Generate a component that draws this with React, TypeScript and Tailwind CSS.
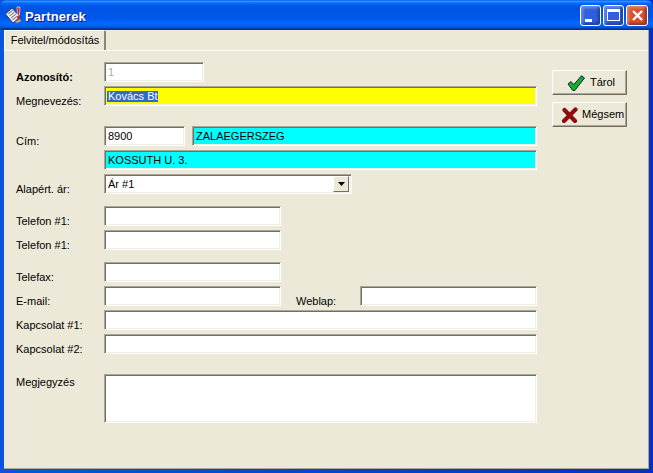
const sunken =
  "h-5 border border-t-[#aca899] border-l-[#aca899] border-r-white border-b-white shadow-[inset_1px_1px_0_#716f64,inset_-1px_-1px_0_#f1efe2]"

function Field({ className = "", children }: { className?: string; children?: React.ReactNode }) {
  return (
    <div className={`${sunken} flex shrink-0 items-center overflow-hidden pl-[3px] pt-[1px] leading-none ${className}`}>
      {children}
    </div>
  )
}

function Row({
  label,
  bold,
  className = "",
  children,
}: {
  label: string
  bold?: boolean
  className?: string
  children?: React.ReactNode
}) {
  return (
    <div className={`flex h-5 ${className}`}>
      <span className={`w-[88px] shrink-0 pt-[10px] leading-none ${bold ? "font-bold" : ""}`}>{label}</span>
      {children}
    </div>
  )
}

function CapButton({ children, className = "" }: { children: React.ReactNode; className?: string }) {
  return (
    <div
      className={`flex h-[21px] items-center justify-center rounded-[3px] border border-white shadow-[inset_-2px_-2px_3px_rgba(0,0,40,0.35),inset_2px_2px_3px_rgba(255,255,255,0.3)] ${className}`}
    >
      {children}
    </div>
  )
}

function PushButton({ children, className = "" }: { children: React.ReactNode; className?: string }) {
  return (
    <div
      className={`flex h-[25px] w-[75px] items-center border border-t-white border-l-white border-r-[#716f64] border-b-[#716f64] shadow-[inset_-1px_-1px_0_#aca899] ${className}`}
    >
      {children}
    </div>
  )
}

function AppIcon() {
  return (
    <svg width="18" height="18" viewBox="0 0 18 18">
      <path d="M0.5 8 L7 2 L15 11 L8 17 Z" fill="#f4f4fa" stroke="#3a3a4a" strokeWidth="1" />
      <path d="M3 8 L8 4 M4.5 10 L9.5 6 M6 12 L11 8 M7.5 14 L12.5 10" stroke="#8a8a9a" strokeWidth="1.2" />
      <path d="M12 1 L15 1 L14.5 9 L12.5 9 Z" fill="#e81818" stroke="#fff" strokeWidth="0.6" />
      <circle cx="13.5" cy="11.5" r="1.4" fill="#e81818" />
      <path d="M10 16 L15 13 L16 15 L12 17 Z" fill="#e8a060" />
    </svg>
  )
}

export default function App() {
  return (
    <div className="flex h-[473px] w-[653px] flex-col overflow-hidden bg-gradient-to-r from-[#0855dd] to-[#0331c4] font-['Liberation_Sans',sans-serif] text-[11px] text-black">
      {/* title bar */}
      <div className="flex h-[30px] shrink-0 items-center justify-between rounded-t-[7px] bg-[linear-gradient(to_bottom,#0058ee_0%,#3593ff_4%,#288eff_6%,#127dff_8%,#036ffc_10%,#0262ee_14%,#0057e5_20%,#0054e3_24%,#0055eb_56%,#005bf5_66%,#026afe_76%,#0062ef_86%,#0052d6_92%,#0040ab_94%,#003092_100%)] pl-[5px] pr-[5px]">
        <div className="flex items-center gap-[2px]">
          <AppIcon />
          <span className="pt-[3px] text-[13px] font-bold tracking-[0.1px] text-white [text-shadow:1px_1px_0_#0f1089]">
            Partnerek
          </span>
        </div>
        <div className="flex gap-[2px]">
          <CapButton className="w-[21px] bg-[#2f5fdf]">
            <div className="mt-[10px] mr-[5px] h-[3px] w-[7px] bg-white" />
          </CapButton>
          <CapButton className="w-[21px] bg-[#2f5fdf]">
            <div className="h-[12px] w-[13px] border border-t-[3px] border-white" />
          </CapButton>
          <CapButton className="w-[22px] bg-[#d9512c]">
            <svg width="13" height="13" viewBox="0 0 13 13">
              <path d="M2 2 L11 11 M11 2 L2 11" stroke="#fff" strokeWidth="2.4" />
            </svg>
          </CapButton>
        </div>
      </div>

      {/* client area */}
      <div className="mx-[4px] mb-[4px] flex min-h-0 flex-1 flex-col border-r border-b border-[#aca899] bg-[#ece9d8]">
        <div className="flex h-[20px] shrink-0">
          <div className="flex w-[102px] items-center justify-center rounded-t-[2px] border-t border-l border-r-2 border-t-white border-l-white border-r-[#8a8778] pl-[1px] leading-none">
            Felvitel/módosítás
          </div>
        </div>
        <div className="flex min-h-0 flex-1 border-t border-white">
          {/* form */}
          <div className="ml-[12px] mt-[11px] flex w-[521px] flex-col gap-1">
            <Row label="Azonosító:" bold>
              <Field className="w-[100px] bg-white text-[#aca899]">1</Field>
            </Row>
            <Row label="Megnevezés:">
              <Field className="w-[433px] bg-[#ffff00]">
                <span className="-ml-[1px] bg-[#316ac5] pl-[1px] text-white">Kovács Bt</span>
              </Field>
            </Row>
            <Row label="Cím:" className="mt-[16px]">
              <Field className="w-[81px] bg-white">8900</Field>
              <Field className="ml-[7px] w-[345px] bg-[#00ffff]">ZALAEGERSZEG</Field>
            </Row>
            <Row label="">
              <Field className="w-[433px] bg-[#00ffff]">KOSSUTH U. 3.</Field>
            </Row>
            <Row label="Alapért. ár:">
              <Field className="w-[248px] bg-white !pr-[2px]">
                <span className="flex-1">Ár #1</span>
                <span className="mb-[1px] flex h-4 w-4 items-center justify-center border border-t-white border-l-white border-r-[#716f64] border-b-[#716f64] bg-[#ece9d8]">
                  <svg width="7" height="4" viewBox="0 0 7 4">
                    <path d="M0 0 H7 L3.5 4 Z" fill="#000" />
                  </svg>
                </span>
              </Field>
            </Row>
            <Row label="Telefon #1:" className="mt-[8px]">
              <Field className="w-[177px] bg-white" />
            </Row>
            <Row label="Telefon #1:">
              <Field className="w-[177px] bg-white" />
            </Row>
            <Row label="Telefax:" className="mt-[8px]">
              <Field className="w-[177px] bg-white" />
            </Row>
            <Row label="E-mail:">
              <Field className="w-[177px] bg-white" />
              <span className="w-[79px] shrink-0 pl-[15px] pt-[10px] leading-none">Weblap:</span>
              <Field className="w-[177px] bg-white" />
            </Row>
            <Row label="Kapcsolat #1:">
              <Field className="w-[433px] bg-white" />
            </Row>
            <Row label="Kapcsolat #2:">
              <Field className="w-[433px] bg-white" />
            </Row>
            <div className="mt-[16px] flex">
              <span className="w-[88px] shrink-0">Megjegyzés</span>
              <Field className="!h-[49px] w-[433px] bg-white" />
            </div>
          </div>

          {/* buttons */}
          <div className="ml-[15px] mt-[19px] flex flex-col gap-[7px]">
            <PushButton className="gap-[5px] pl-[14px]">
              <svg width="18" height="16" viewBox="0 0 18 16">
                <path d="M1 9 L4 6.5 L6.8 9.5 L14.5 0.8 L17.5 3 L7.8 15.5 L5.8 15.5 Z" fill="#14b01e" stroke="#06215e" strokeWidth="1" />
              </svg>
              <span>Tárol</span>
            </PushButton>
            <PushButton className="gap-[4px] pl-[9px]">
              <svg width="16" height="16" viewBox="0 0 16 16">
                <path d="M2.5 3 L13 14 M13.5 2.5 L2 14" stroke="#8e0c10" strokeWidth="4.2" strokeLinecap="round" />
              </svg>
              <span>Mégsem</span>
            </PushButton>
          </div>
        </div>
      </div>
    </div>
  )
}
